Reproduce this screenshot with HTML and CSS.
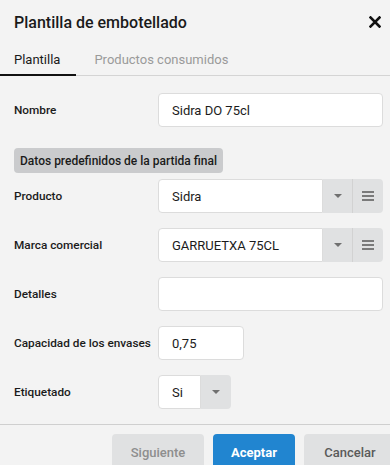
FILE: index.html
```html
<!DOCTYPE html>
<html lang="es">
<head>
<meta charset="utf-8">
<link rel="stylesheet" href="styles.css">
</head>
<body>
<div class="dialog">
  <div class="header">
    <div class="title">Plantilla de embotellado</div>
    <svg class="close" width="12" height="12" viewBox="0 0 12 12"><path d="M1.5 1.5 L10.5 10.5 M10.5 1.5 L1.5 10.5" stroke="#111" stroke-width="2.6" stroke-linecap="square"/></svg>
  </div>
  <div class="tabs">
    <div class="tab active">Plantilla</div>
    <div class="tab">Productos consumidos</div>
  </div>
  <div class="body">
    <div class="row">
      <div class="label">Nombre</div>
      <div class="field wide"><div class="input">Sidra DO 75cl</div></div>
    </div>
    <div class="section"><span class="section-title">Datos predefinidos de la partida final</span></div>
    <div class="row first">
      <div class="label">Producto</div>
      <div class="field wide">
        <div class="input grow">Sidra</div>
        <div class="btn-drop"><span class="tri"></span></div>
        <div class="btn-menu"><span class="burger"></span></div>
      </div>
    </div>
    <div class="row">
      <div class="label">Marca comercial</div>
      <div class="field wide">
        <div class="input grow">GARRUETXA 75CL</div>
        <div class="btn-drop"><span class="tri"></span></div>
        <div class="btn-menu"><span class="burger"></span></div>
      </div>
    </div>
    <div class="row">
      <div class="label">Detalles</div>
      <div class="field wide"><div class="input"></div></div>
    </div>
    <div class="row">
      <div class="label">Capacidad de los envases</div>
      <div class="field"><div class="input small">0,75</div></div>
    </div>
    <div class="row">
      <div class="label">Etiquetado</div>
      <div class="field">
        <div class="input tiny">Si</div>
        <div class="btn-drop last"><span class="tri"></span></div>
      </div>
    </div>
  </div>
  <div class="footer">
    <div class="button grey disabled">Siguiente</div>
    <div class="button primary">Aceptar</div>
    <div class="button grey">Cancelar</div>
  </div>
</div>
</body>
</html>
```
FILE: styles.css
```css
html, body {
  margin: 0;
  padding: 0;
  background: #f3f3f3;
  overflow: hidden;
}
body {
  font-family: Roboto, "Liberation Sans", Arial, sans-serif;
  color: #1b1b1b;
  width: 390px;
  height: 465px;
}
.dialog {
  width: 390px;
}
.header {
  height: 44px;
  display: flex;
  align-items: center;
  justify-content: space-between;
  padding: 0 9px 0 14px;
}
.title {
  font-size: 16px;
  font-weight: 500;
  color: #1a1a1a;
}
.close {
  display: block;
}
.tabs {
  display: flex;
  height: 31px;
  border-bottom: 1px solid #d4d4d4;
}
.tab {
  font-size: 13px;
  color: #9a9a9a;
  padding: 0 18px;
  display: flex;
  align-items: center;
  height: 30px;
}
.tab.active {
  color: #1a1a1a;
  padding: 0 16px 0 14px;
  border-bottom: 2px solid #111;
  margin-bottom: -1px;
}
.body {
  padding: 17px 7px 0 14px;
}
.row {
  display: flex;
  align-items: center;
  height: 34px;
  margin-bottom: 15px;
}
.row.first {
  margin-top: 6px;
}
.label {
  width: 144px;
  flex: none;
  font-size: 11.8px;
  font-weight: 500;
  color: #1b1b1b;
}
.field {
  display: flex;
  height: 34px;
}
.field.wide {
  flex: 1;
}
.input {
  box-sizing: border-box;
  flex: 1;
  height: 34px;
  background: #fff;
  border: 1px solid #dcdcdc;
  border-radius: 4px;
  padding: 0 13px;
  font-size: 13px;
  color: #1b1b1b;
  display: flex;
  align-items: center;
}
.input.grow {
  border-radius: 4px 0 0 4px;
}
.input.small {
  flex: none;
  width: 86px;
}
.input.tiny {
  flex: none;
  width: 43px;
  border-radius: 4px 0 0 4px;
}
.btn-drop, .btn-menu {
  width: 29px;
  height: 34px;
  background: #e0e1e2;
  display: flex;
  align-items: center;
  justify-content: center;
  flex: none;
}
.btn-menu {
  width: 30px;
  border-left: 1px solid #d2d2d2;
  border-radius: 0 4px 4px 0;
}
.btn-drop.last {
  width: 30px;
  border-radius: 0 4px 4px 0;
}
.tri {
  width: 0;
  height: 0;
  border-left: 4px solid transparent;
  border-right: 4px solid transparent;
  border-top: 4px solid #707070;
}
.burger {
  width: 12px;
  height: 2px;
  background: #7a7a7a;
  box-shadow: 0 -4px 0 #7a7a7a, 0 4px 0 #7a7a7a;
}
.section {
  margin-top: 21px;
  display: flex;
}
.section-title {
  background: #cacbcd;
  border-radius: 4px;
  font-size: 12px;
  font-weight: 500;
  color: #1b1b1b;
  height: 25px;
  padding: 0 6px;
  display: flex;
  align-items: center;
}
.footer {
  border-top: 1px solid #cfcfcf;
  margin-top: 0;
  padding-top: 9px;
  display: flex;
  justify-content: flex-end;
  gap: 9px;
  margin-right: -6px;
}
.button {
  height: 36px;
  box-sizing: border-box;
  border-radius: 4px;
  font-size: 13px;
  font-weight: 500;
  display: flex;
  align-items: center;
  justify-content: center;
}
.button.grey {
  background: #e0e1e2;
  color: #5a5a5a;
  width: 92px;
}
.button.disabled {
  color: #8e8e8e;
}
.button.primary {
  background: #2185d0;
  color: #fff;
  font-weight: 700;
  width: 82px;
}
```
